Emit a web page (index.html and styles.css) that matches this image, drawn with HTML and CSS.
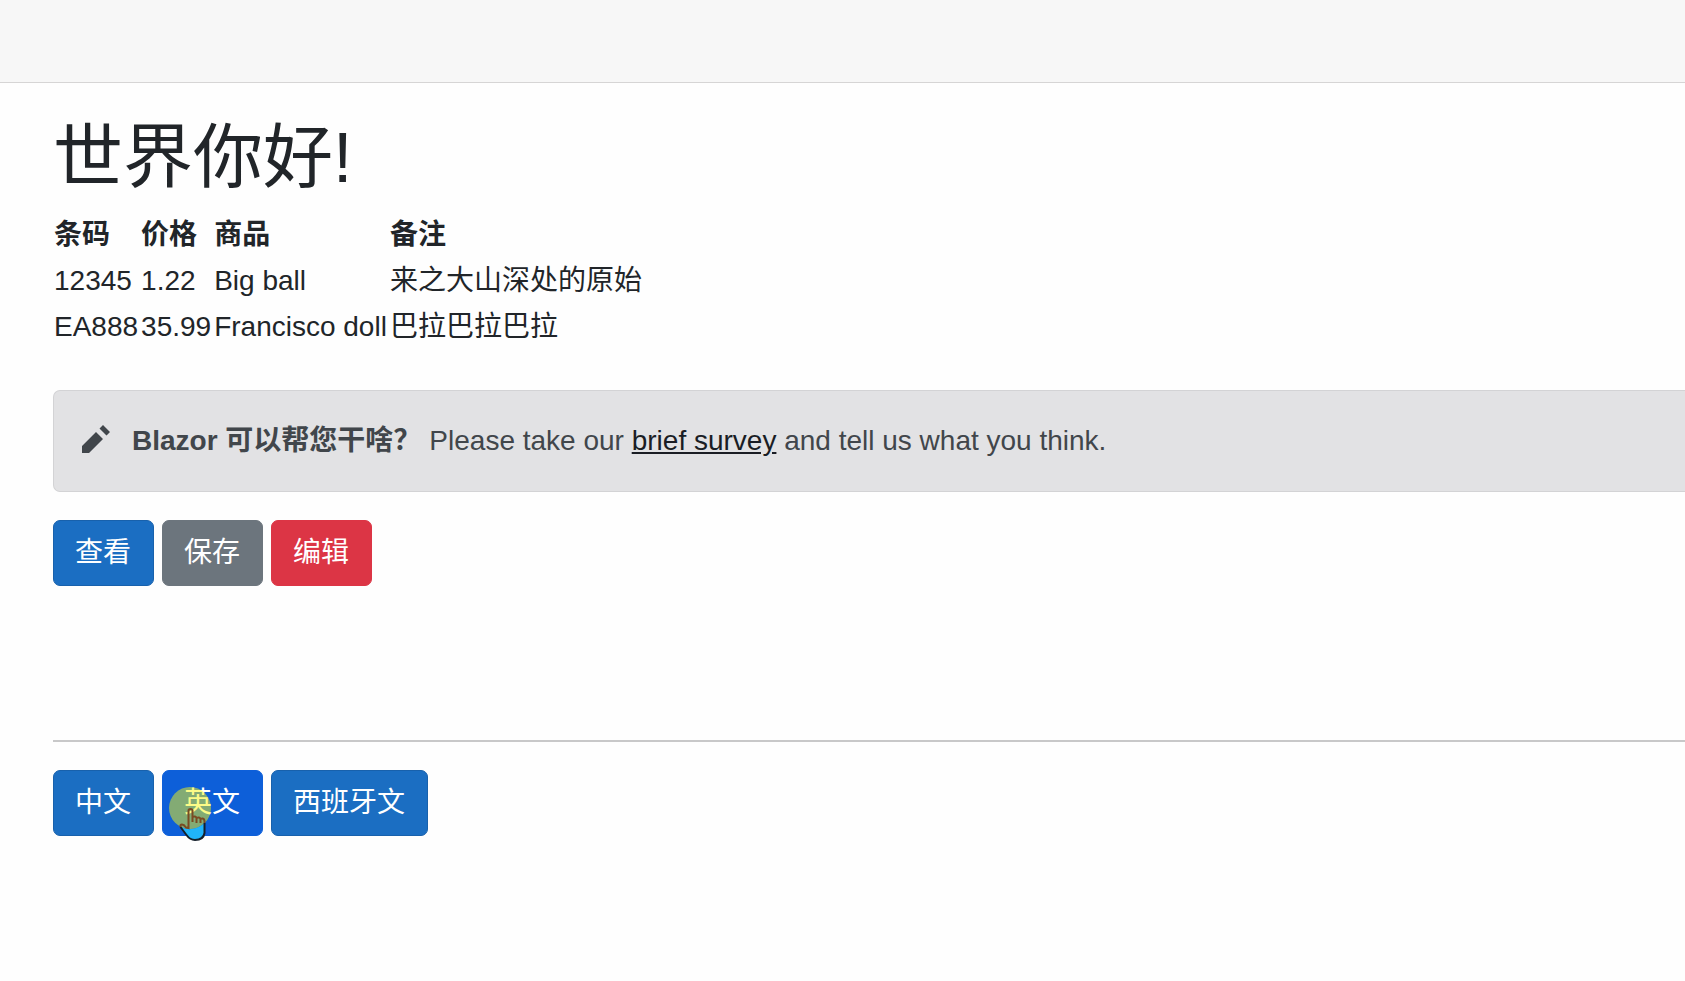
FILE: index.html
```
<!DOCTYPE html>
<html lang="zh-CN">
<head>
    <meta charset="UTF-8">
    <meta name="viewport" content="width=device-width, initial-scale=1.0">
    <title>世界你好!</title>
    <link rel="stylesheet" href="styles.css">
</head>
<body>

<header class="top-row"></header>

<main class="content">
    <h1>世界你好!</h1>

    <table class="goods">
        <thead>
            <tr>
                <th>条码</th>
                <th>价格</th>
                <th>商品</th>
                <th>备注</th>
            </tr>
        </thead>
        <tbody>
            <tr>
                <td>12345</td>
                <td>1.22</td>
                <td>Big ball</td>
                <td>来之大山深处的原始</td>
            </tr>
            <tr>
                <td>EA888</td>
                <td>35.99</td>
                <td>Francisco doll</td>
                <td>巴拉巴拉巴拉</td>
            </tr>
        </tbody>
    </table>

    <div class="alert">
        <svg class="icon-pencil" viewBox="0 0 8 8" aria-hidden="true">
            <path d="M6 0l-1 1 2 2 1-1-2-2zm-2 2l-4 4v2h2l4-4-2-2z"/>
        </svg>
        <strong>Blazor 可以帮您干啥？</strong>
        <span>Please take our <a href="#">brief survey</a> and tell us what you think.</span>
    </div>

    <div class="buttons">
        <button type="button" class="btn btn-primary">查看</button>
        <button type="button" class="btn btn-secondary">保存</button>
        <button type="button" class="btn btn-danger">编辑</button>
    </div>

    <hr>

    <!-- Language switch -->
    <div class="buttons">
        <button type="button" class="btn btn-primary">中文</button>
        <button type="button" class="btn btn-primary active">英文
            <svg class="pointer" viewBox="0 0 44 56" aria-hidden="true">
                <circle class="spot" cx="21" cy="21" r="21"/>
                <path class="palm" d="M11.5 40A21 21 0 0 0 35.5 36V46Q34.5 53 26 53Q21 53 17.5 48Z"/>
                <path class="palm-line" d="M11.5 40L17.5 48Q21 53 26 53Q34.5 53 35.5 46V36"/>
                <path class="fingers" d="M11.5 40Q11 37.500 13 37.500Q15 37.500 17 40.500L19.500 41V23.500Q19.500 22 21.500 22T23.500 23.500V35M23.500 30Q26.500 28.500 27.500 31V36M27.500 31Q30.500 29.500 31.500 32V36M31.500 32Q35 30.500 35.500 34V36"/>
            </svg>
        </button>
        <button type="button" class="btn btn-primary">西班牙文</button>
    </div>
</main>

</body>
</html>
```

FILE: styles.css
```
* {
    margin: 0;
    padding: 0;
    box-sizing: border-box;
}

body {
    font-family: "Liberation Sans", "Noto Sans CJK SC", sans-serif;
    font-size: 28px;
    line-height: 42px;
    color: #212529;
    background-color: #fefefe;
}

.top-row {
    height: 83px;
    background-color: #f7f7f7;
    border-bottom: 1px solid #d6d5d5;
}

.content {
    padding: 33px 0 33px 53px;
}

h1 {
    font-size: 70px;
    font-weight: 400;
    line-height: 84px;
    margin-bottom: 12px;
}

/* Goods table */
.goods {
    border-collapse: collapse;
    margin-bottom: 40px;
}

.goods th,
.goods td {
    padding: 2px 2px 2px 1px;
    text-align: left;
    white-space: nowrap;
}

/* Survey prompt */
.alert {
    display: flex;
    align-items: center;
    padding: 29px 28px;
    margin-bottom: 28px;
    color: #41464b;
    background-color: #e2e2e4;
    border: 1px solid #d3d3d5;
    border-right: none;
    border-radius: 7px 0 0 7px;
}

.alert strong {
    margin: 0 8px 0 22px;
}

.alert a {
    color: #1a1d24;
    text-decoration: underline;
}

.icon-pencil {
    width: 28px;
    height: 28px;
    margin-bottom: 4px;
    fill: currentColor;
}

/* Buttons */
.buttons {
    display: flex;
    gap: 8px;
}

.btn {
    position: relative;
    padding: 11px 22px 11px 21px;
    font: inherit;
    color: #fff;
    border: 1px solid transparent;
    border-radius: 7px;
    cursor: pointer;
}

.btn-primary {
    background-color: #1b6ec2;
    border-color: #1861ac;
}

.btn-primary.active {
    background-color: #0d5fd9;
    border-color: #0d5fd9;
}

.btn-secondary {
    background-color: #6c757d;
    border-color: #6c757d;
}

.btn-danger {
    background-color: #dc3545;
    border-color: #dc3545;
}

hr {
    margin: 154px 0 28px;
    border: none;
    border-top: 2px solid #c8c8c9;
}

/* Mouse pointer with its highlight spot */
.pointer {
    position: absolute;
    left: 6px;
    top: 16px;
    width: 44px;
    height: 56px;
    pointer-events: none;
}

.palm {
    fill: #20b4fa;
}

.palm-line {
    fill: none;
    stroke: #15202b;
    stroke-width: 2;
}

.fingers {
    fill: none;
    stroke: #7a4a22;
    stroke-width: 2;
}

.spot {
    fill: #faf80f;
    fill-opacity: 0.5;
}
```
